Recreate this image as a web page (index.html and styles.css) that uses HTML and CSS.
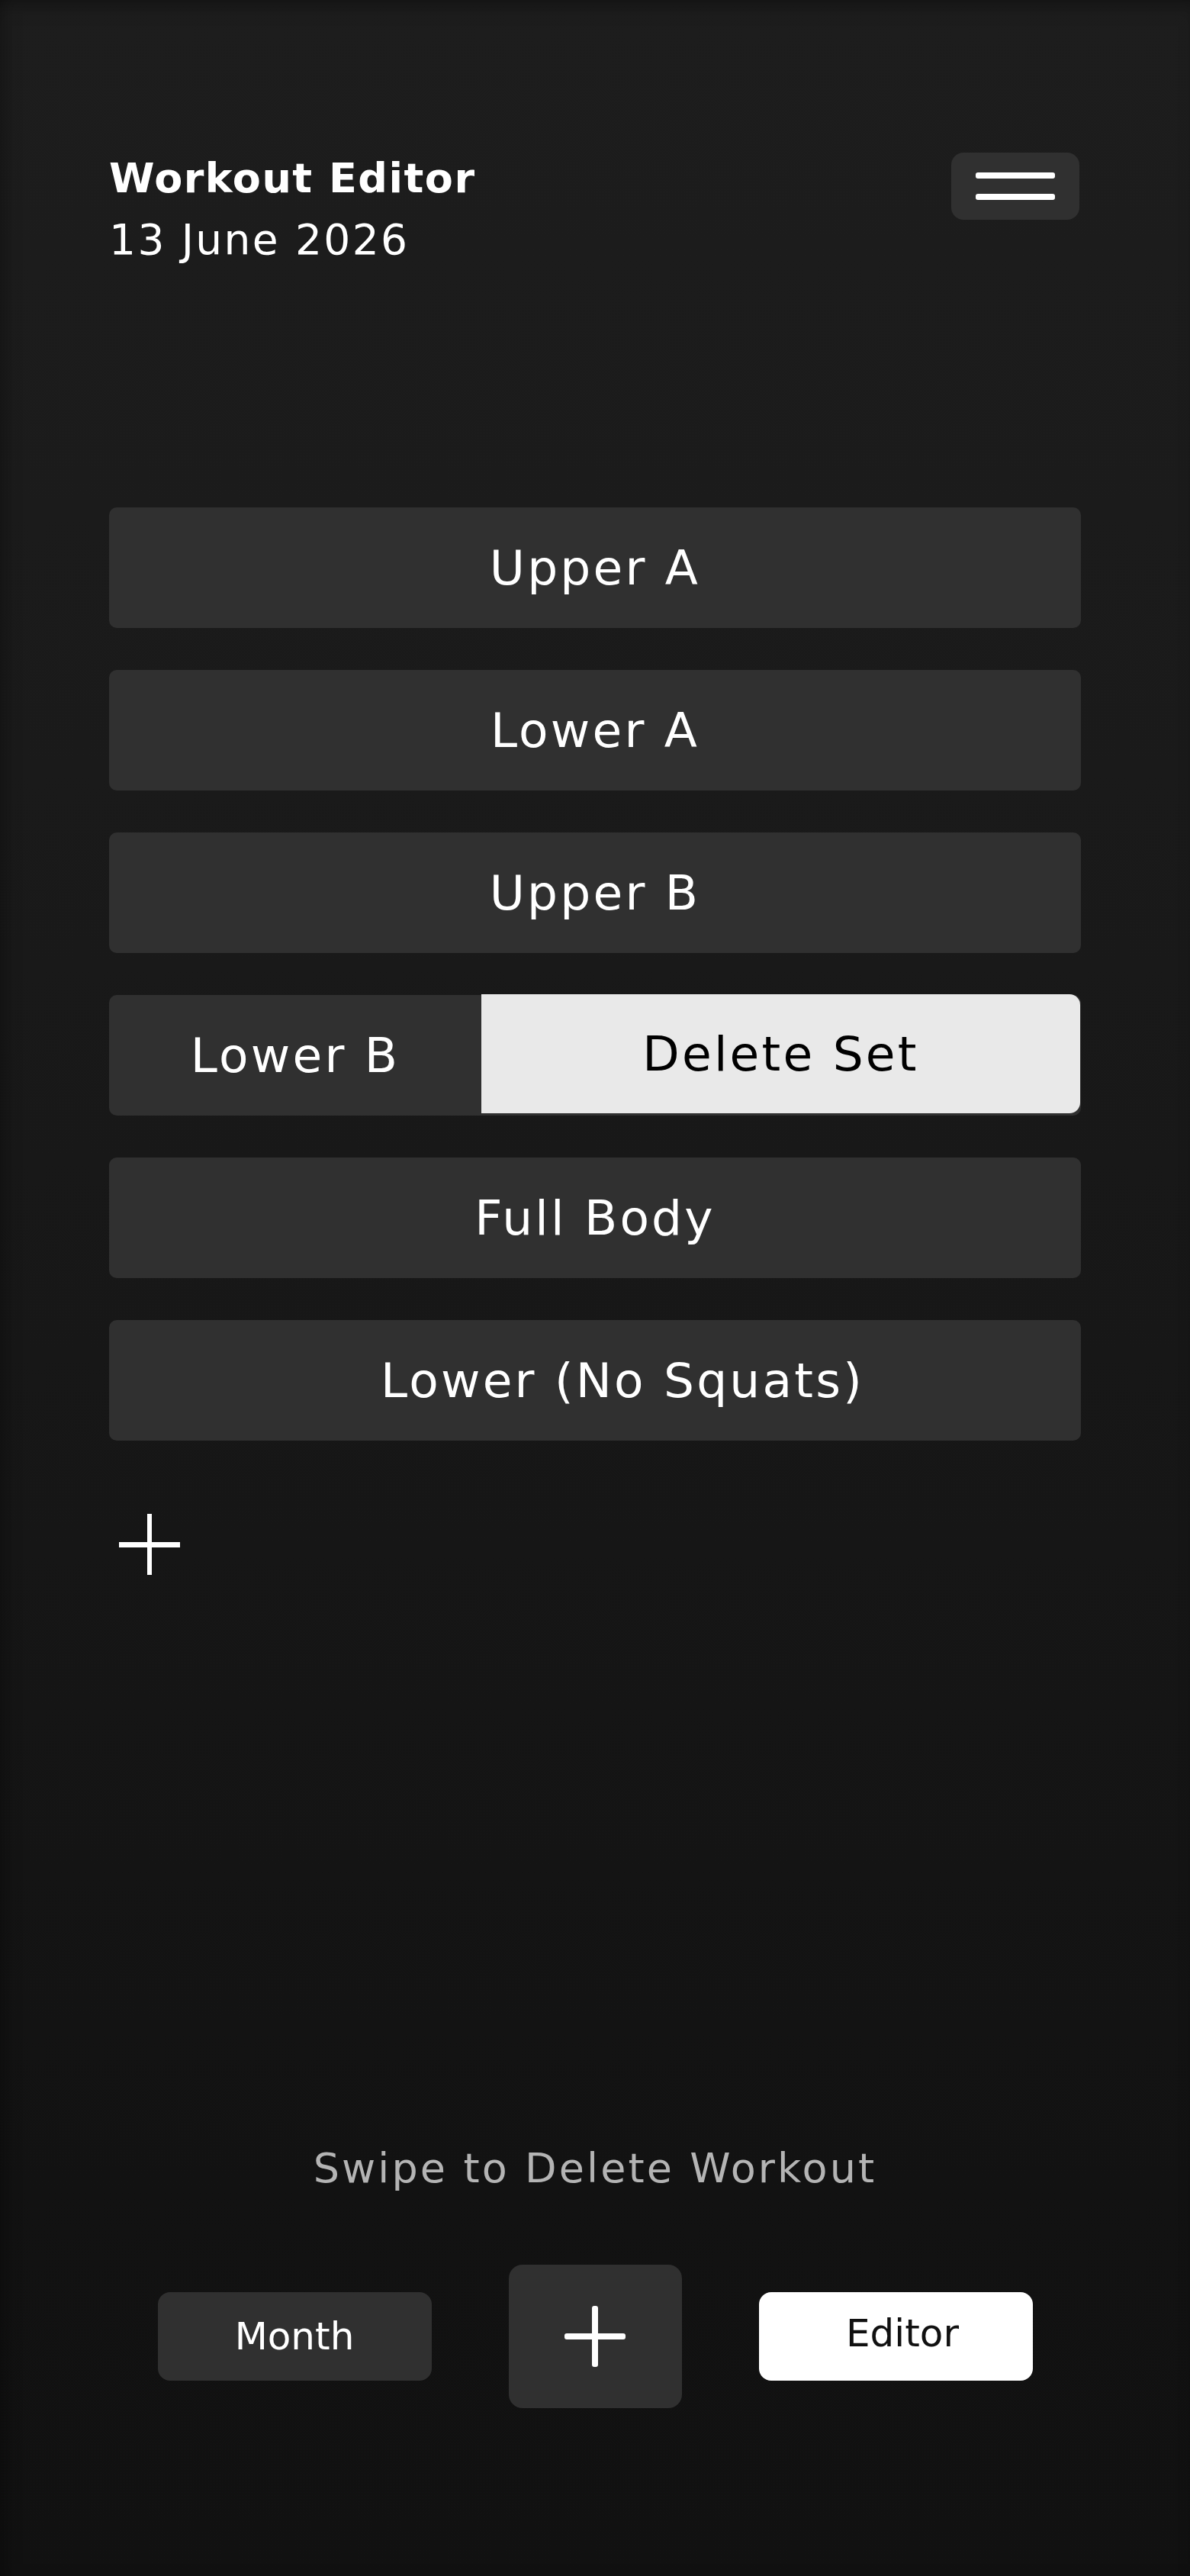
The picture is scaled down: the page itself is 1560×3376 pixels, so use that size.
FILE: index.html
```html
<!DOCTYPE html>
<html lang="en">
<head>
<meta charset="utf-8">
<title>Workout Editor</title>
<link rel="stylesheet" href="styles.css">
</head>
<body>
<div class="screen">
  <header class="header">
    <div class="heading">
      <h1 class="title">Workout Editor</h1>
      <p class="date">13 June 2026</p>
    </div>
    <button class="menu-btn" aria-label="Menu">
      <span class="menu-bar"></span>
      <span class="menu-bar"></span>
    </button>
  </header>

  <ul class="workout-list">
    <li class="workout">Upper A</li>
    <li class="workout">Lower A</li>
    <li class="workout">Upper B</li>
    <li class="workout workout-swiped">
      <span class="workout-name">Lower B</span>
      <span class="delete-panel">Delete Set</span>
    </li>
    <li class="workout">Full Body</li>
    <li class="workout workout-offset">Lower (No Squats)</li>
  </ul>

  <button class="add-workout" aria-label="Add workout">
    <svg width="80" height="80" viewBox="0 0 80 80"><rect x="37" y="0" width="6" height="80" fill="#fff"/><rect x="0" y="37" width="80" height="7" fill="#fff"/></svg>
  </button>

  <p class="hint">Swipe to Delete Workout</p>

  <nav class="bottom-nav">
    <button class="nav-btn">Month</button>
    <button class="nav-plus" aria-label="Add">
      <svg width="80" height="80" viewBox="0 0 80 80"><rect x="36" y="0" width="8" height="80" rx="3" fill="#fff"/><rect x="0" y="36" width="80" height="8" rx="3" fill="#fff"/></svg>
    </button>
    <button class="nav-btn nav-btn-active">Editor</button>
  </nav>
</div>
</body>
</html>
```

FILE: styles.css
```css
* { box-sizing: border-box; }

html, body {
  margin: 0;
  padding: 0;
}

body {
  background: #111111;
  font-family: "DejaVu Sans", "Liberation Sans", sans-serif;
  color: #ffffff;
}

.screen {
  min-height: 3376px;
  background: linear-gradient(180deg, #1d1d1d 0%, #1a1a1a 30%, #161616 60%, #121212 85%, #111111 100%);
  box-shadow: inset 0 18px 30px -20px rgba(0,0,0,0.5), inset 14px 0 30px -20px rgba(0,0,0,0.5);
  display: flex;
  flex-direction: column;
  align-items: center;
}

.header {
  width: 1274px;
  padding-top: 200px;
  display: flex;
  justify-content: space-between;
  align-items: flex-start;
}

.heading {
  padding-top: 1px;
}

.title {
  margin: 0;
  font-size: 54px;
  line-height: 66px;
  font-weight: 700;
  letter-spacing: 1.5px;
}

.date {
  margin: 14px 0 0;
  font-size: 55px;
  line-height: 66px;
  font-weight: 400;
  letter-spacing: 2.4px;
}

.menu-btn {
  width: 168px;
  height: 88px;
  margin-right: 2px;
  border: 0;
  border-radius: 16px;
  background: #303030;
  display: flex;
  flex-direction: column;
  align-items: center;
  justify-content: center;
  gap: 20px;
  padding: 0;
}

.menu-bar {
  display: block;
  width: 104px;
  height: 8px;
  border-radius: 3px;
  background: #ffffff;
}

.workout-list {
  list-style: none;
  margin: 318px 0 0;
  padding: 0;
  width: 1274px;
  display: flex;
  flex-direction: column;
  gap: 55px;
}

.workout {
  height: 158px;
  border-radius: 10px;
  background: #303030;
  display: flex;
  align-items: center;
  justify-content: center;
  font-size: 63px;
  letter-spacing: 3.2px;
  color: #ffffff;
}

.workout-offset {
  padding-left: 72px;
}

.workout-swiped {
  justify-content: flex-start;
  align-items: stretch;
}

.workout-name {
  width: 488px;
  display: flex;
  align-items: center;
  justify-content: center;
}

.delete-panel {
  flex: 1;
  margin: -1px 1px 3px 0;
  border-radius: 0 14px 14px 0;
  background: #e9e9e9;
  color: #000000;
  display: flex;
  align-items: center;
  justify-content: center;
}

.add-workout {
  align-self: flex-start;
  margin: 96px 0 0 156px;
  padding: 0;
  border: 0;
  background: none;
  width: 80px;
  height: 80px;
  display: block;
}

.add-workout svg, .nav-plus svg { display: block; }

.hint {
  margin: 745px 0 0;
  font-size: 54px;
  line-height: 66px;
  letter-spacing: 3.1px;
  color: #b4b4b4;
  text-align: center;
}

.bottom-nav {
  margin-top: 93px;
  display: flex;
  align-items: center;
  gap: 101px;
}

.nav-btn {
  width: 359px;
  height: 116px;
  border: 0;
  border-radius: 16px;
  background: #303030;
  color: #ffffff;
  font-family: "DejaVu Sans", "Liberation Sans", sans-serif;
  font-size: 50px;
  padding: 0;
}

.nav-btn-active {
  background: #ffffff;
  color: #111111;
  padding: 0 0 8px 18px;
}

.nav-plus {
  width: 227px;
  height: 188px;
  border: 0;
  border-radius: 18px;
  background: #303030;
  display: flex;
  align-items: center;
  justify-content: center;
  padding: 0;
}
```
